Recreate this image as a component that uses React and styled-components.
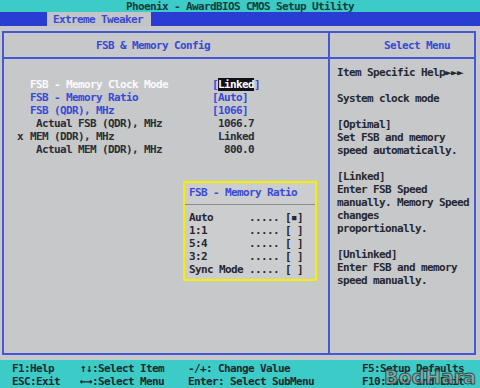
import React from 'react';
import styled, { createGlobalStyle } from 'styled-components';

const GlobalStyle = createGlobalStyle`
  html, body {
    margin: 0;
    padding: 0;
    background: #c4c6c8;
  }
`;

const Screen = styled.div`
  position: relative;
  width: 480px;
  height: 388px;
  display: flex;
  flex-direction: column;
  overflow: hidden;
  background: #c6c8ca;
  font-family: 'DejaVu Sans Mono', 'Liberation Mono', monospace;
  font-size: 11px;
  font-weight: bold;
  letter-spacing: -0.62px;
  line-height: 13px;
  white-space: pre;
`;

const TitleBar = styled.div`
  height: 12px;
  line-height: 13px;
  background: #3ccbc6;
  color: #123c3c;
  text-align: center;
`;

const MenuBar = styled.div`
  height: 14px;
  background: #2a3dd2;
  padding-left: 47px;
  display: flex;
`;

const Tab = styled.div`
  width: 98px;
  background: #c2c4c8;
  color: #3a4ad4;
  padding-left: 6px;
  line-height: 15px;
`;

const Body = styled.div`
  flex: 1;
  padding: 5px 4px 5px 2px;
  background: #c6c8ca;
`;

const Frame = styled.div`
  height: 100%;
  box-sizing: border-box;
  border: 2px solid #4656d6;
  display: grid;
  grid-template-columns: 324px 1fr;
`;

const Panel = styled.div`
  position: relative;
  display: flex;
  flex-direction: column;
  border-left: ${p => (p.$divider ? '2px solid #4656d6' : 'none')};
`;

const PanelHeader = styled.div`
  height: 24px;
  line-height: 25px;
  border-bottom: 2px solid #4656d6;
  color: #3a4ad6;
  padding-left: ${p => p.$indent}px;
`;

const Rows = styled.div`
  padding: 19px 0 0 13px;
`;

const Row = styled.div`
  display: grid;
  grid-template-columns: 13px 182px auto;
  height: 13px;
  color: ${p => (p.$tone === 'white' ? '#fafafa' : p.$tone === 'blue' ? '#3a4ad8' : '#2c2e38')};
`;

const Bracket = styled.span`
  color: #3a4ad8;
`;

const Selected = styled.span`
  background: #101018;
  color: #ffffff;
`;

const HelpText = styled.div`
  padding: 7px 0 0 7px;
  color: #26282f;
`;

const HelpTitle = styled.span`
  color: #26282f;
`;

const Popup = styled.div`
  position: absolute;
  left: 179px;
  top: 148px;
  width: 134px;
  height: 100px;
  box-sizing: border-box;
  border: 2px solid #f4f000;
  background: #cbcdcf;
  display: flex;
  flex-direction: column;
`;

const PopupTitle = styled.div`
  height: 21px;
  line-height: 20px;
  padding-left: 4px;
  color: #3a4ad8;
  border-bottom: 1px solid #8a8c92;
`;

const PopupList = styled.div`
  padding: 6px 0 0 4px;
  color: #26282f;
`;

const BottomBar = styled.div`
  height: 28px;
  box-sizing: border-box;
  padding: 2px 0 0 12px;
  background: #3ccbc6;
  color: #1c2a30;
  display: grid;
  grid-template-columns: 68px 108px 174px auto;
  grid-auto-rows: 13px;
`;

const Watermark = styled.div`
  position: absolute;
  right: 4px;
  bottom: 0px;
  font-family: 'DejaVu Sans', 'Liberation Sans', sans-serif;
  font-size: 19px;
  font-weight: bold;
  letter-spacing: 0;
  line-height: 22px;
  color: rgba(150, 160, 160, 0.75);
  -webkit-text-stroke: 1px rgba(40, 50, 50, 0.8);
`;

const settings = [
  { mark: '', label: 'FSB - Memory Clock Mode', value: 'Linked', tone: 'white', selected: true },
  { mark: '', label: 'FSB - Memory Ratio', value: 'Auto', tone: 'blue', bracket: true },
  { mark: '', label: 'FSB (QDR), MHz', value: '1066', tone: 'blue', bracket: true },
  { mark: '', label: ' Actual FSB (QDR), MHz', value: ' 1066.7', tone: 'dark' },
  { mark: 'x', label: 'MEM (DDR), MHz', value: ' Linked', tone: 'dark' },
  { mark: '', label: ' Actual MEM (DDR), MHz', value: '  800.0', tone: 'dark' },
];

const ratios = [
  ['Auto     ', '▪'],
  ['1:1      ', ' '],
  ['5:4      ', ' '],
  ['3:2      ', ' '],
  ['Sync Mode', ' '],
];

const help = [
  '',
  'System clock mode',
  '',
  '[Optimal]',
  'Set FSB and memory',
  'speed automatically.',
  '',
  '[Linked]',
  'Enter FSB Speed',
  'manually. Memory Speed',
  'changes',
  'proportionally.',
  '',
  '[Unlinked]',
  'Enter FSB and memory',
  'speed manually.',
];

const renderValue = s => {
  if (s.selected) {
    return (
      <span>
        <Bracket>[</Bracket>
        <Selected>{s.value}</Selected>
        <Bracket>]</Bracket>
      </span>
    );
  }
  if (s.bracket) return <span>[{s.value}]</span>;
  return <span>{s.value}</span>;
};

const App = () => {
  return (
    <>
      <GlobalStyle />
      <Screen>
        <TitleBar>Phoenix - AwardBIOS CMOS Setup Utility</TitleBar>
        <MenuBar>
          <Tab>Extreme Tweaker</Tab>
        </MenuBar>
        <Body>
          <Frame>
            <Panel>
              <PanelHeader $indent={92}>FSB &amp; Memory Config</PanelHeader>
              <Rows>
                {settings.map(s => (
                  <Row key={s.label} $tone={s.tone}>
                    <span>{s.mark}</span>
                    <span>{s.label}</span>
                    {renderValue(s)}
                  </Row>
                ))}
              </Rows>
              <Popup>
                <PopupTitle>FSB - Memory Ratio</PopupTitle>
                <PopupList>
                  {ratios.map(([name, mark]) => (
                    <div key={name}>{`${name} ..... [${mark}]`}</div>
                  ))}
                </PopupList>
              </Popup>
            </Panel>
            <Panel $divider>
              <PanelHeader $indent={54}>Select Menu</PanelHeader>
              <HelpText>
                <HelpTitle>Item Specific Help►►►</HelpTitle>
                {help.map((line, i) => (
                  <div key={i}>{line || ' '}</div>
                ))}
              </HelpText>
            </Panel>
          </Frame>
        </Body>
        <BottomBar>
          <span>F1:Help</span>
          <span>↑↓:Select Item</span>
          <span>-/+: Change Value</span>
          <span>F5:Setup Defaults</span>
          <span>ESC:Exit</span>
          <span>←→:Select Menu</span>
          <span>Enter: Select SubMenu</span>
          <span>F10:Save and Exit</span>
        </BottomBar>
        <Watermark>BodHara</Watermark>
      </Screen>
    </>
  );
};

export default App;
